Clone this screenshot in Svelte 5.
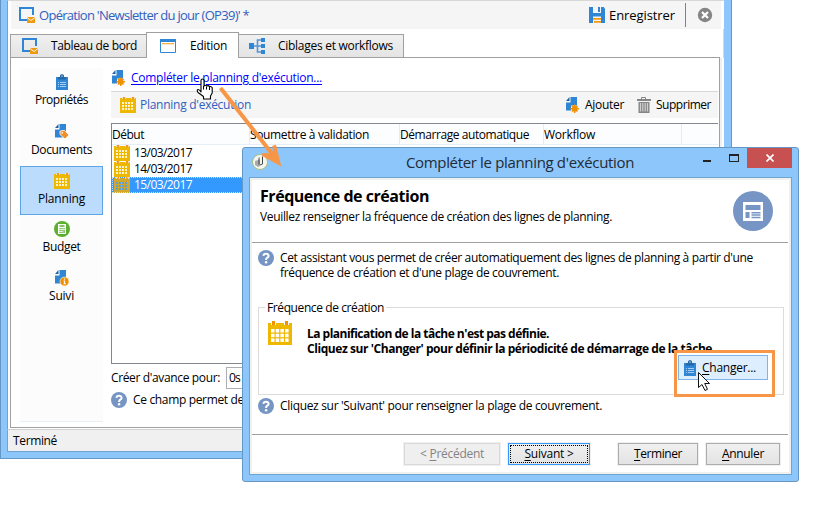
<script>
  const sections = [
    { icon: 'clipboard', label: 'Propriétés', width: 53 },
    { icon: 'doctag', label: 'Documents', width: 61 },
    { icon: 'calendar', label: 'Planning', width: 47, active: true },
    { icon: 'budget', label: 'Budget', width: 38 },
    { icon: 'docinfo', label: 'Suivi', width: 25 }
  ];
  const columns = [
    { label: 'Début', width: 32 },
    { label: 'Soumettre à validation', width: 119 },
    { label: 'Démarrage automatique', width: 129 },
    { label: 'Workflow', width: 51 }
  ];
  const rows = ['13/03/2017', '14/03/2017', '15/03/2017'];
  let selected = $state(2);

  // Spreads the letters of a label so that it takes the given width.
  function fit(node, width) {
    const natural = node.getBoundingClientRect().width;
    const count = node.textContent.length;
    node.style.letterSpacing = `${(width - natural) / count}px`;
  }
</script>

{#snippet t(text, width)}<span class="t" use:fit={width}>{text}</span>{/snippet}
{#snippet k(key, rest, width, lead = '')}<span class="t" use:fit={width}>{lead}<u>{key}</u>{rest}</span>{/snippet}

{#snippet doc()}
  <path fill="#2e86d4" d="M5.500 0H12v13.500H1V5.500h4.500z" />
  <path fill="#1d62a5" d="M1 4 4.500 0v4z" />
{/snippet}

{#snippet icon(name, size = 16)}
  <svg class="icon" width={size} height={size} viewBox={name === 'calendar' && size === 24 ? '0 0 24 24' : '0 0 16 16'}>
    {#if name === 'calendar' && size === 24}
      <path fill="#efb800" d="M0 2h24v22H0z" />
      <path fill="#fff" d="M3 0h5v4H3zM16 0h5v4h-5z" />
      <path fill="#f09000" d="M4 0h3v4H4zM17 0h3v4h-3z" />
      {#each [8, 12.7, 17.4] as y}
        {#each [3, 7.7, 12.4, 17.1] as x}
          <rect {x} {y} width="3.5" height="3.5" fill="#fff" />
        {/each}
      {/each}
    {:else if name === 'calendar'}
      <path class="leaf" fill="#efb800" d="M0 1h16v15H0z" />
      <path fill="#f6dcae" d="M2 0h4v2H2zM11 0h4v2h-4z" />
      <path fill="#ee9a2a" d="M3 0h2v2.500H3zM12 0h2v2.500h-2z" />
      {#each [5, 8, 11] as y}
        {#each [2, 5, 8, 11] as x}
          <rect class="cell" {x} {y} width="2" height="2" fill="#fdf3d0" />
        {/each}
      {/each}
    {:else if name === 'operation'}
      <path fill="none" stroke="#2e86d4" stroke-width="2" d="M8 13H1V1h13v7" />
      <path fill="#f09a12" d="M8 10h8v6H8z" />
      <path fill="none" stroke="#fff" stroke-width=".9" d="m8 10.500 4 3 4-3" />
    {:else if name === 'window'}
      <path fill="#fff" stroke="#2e86d4" d="M.5 1.500h15v13H.5z" />
      <path fill="#2e86d4" d="M0 1h16v3H0z" />
      <path fill="#f5b14c" d="M2 5h12v1.300H2z" />
    {:else if name === 'workflow'}
      <path fill="#2e86d4" d="M0 5h5v6H0zM12 0h4v4h-4zM12 6h4v4h-4zM12 12h4v4h-4z" />
      <path fill="none" stroke="#4d98da" stroke-width="1.600" d="M5 8h7M12 2H8.500v12H12" />
    {:else if name === 'docadd'}
      {@render doc()}
      <path fill="#f5f7fa" d="M6 8.500h8V15H6z" />
      <path stroke="#f09000" stroke-width="1.500" d="M9.700 7.500v8.500M5.500 11.700H14M6.900 8.900l5.600 5.600M12.500 8.900l-5.600 5.600" />
      <circle cx="9.700" cy="11.700" r="2.700" fill="#f09000" />
    {:else if name === 'doctag'}
      {@render doc()}
      <path fill="#f0902a" stroke="#fff" stroke-width=".8" d="m6 7 4.500-.7 4.500 4.700-4 4L6 10.500z" />
      <circle cx="8.200" cy="8.900" r=".8" fill="#fff" />
    {:else if name === 'docinfo'}
      {@render doc()}
      <circle cx="10.500" cy="11.500" r="4.500" fill="#f09000" stroke="#fff" stroke-width=".6" />
      <path fill="#fff" d="M9.900 8.600h1.200v1.200H9.900zM9.500 10.500h1.600v2.800h.7v.9H9.500v-.9h.6v-1.900h-.6z" />
    {:else if name === 'clipboard'}
      <path fill="#2e86d4" d="M2 3h12v13H2z" />
      <path fill="#9cc3e8" d="M4 3h8v1.500H4z" />
      <path fill="#2468a8" d="M6 3V1.500L7 .3h2l1 1.200V3h2v2.500H4V3z" />
      <path fill="#fff" d="M7.500 1.500h1v1.200h-1z" />
      <path stroke="#a5cbee" d="M4 8.500h1M6 8.500h6M4 10.500h1M6 10.500h6M4 12.500h1M6 12.500h6" />
    {:else if name === 'budget'}
      <circle cx="8" cy="8" r="8" fill="#5bb030" />
      <path fill="#fff" d="M4 3h8v10H4z" />
      <path fill="#5bb030" d="M5.500 4.300h5v1.500h-5zM5.400 7h1.300v1.200H5.400zM7.400 7h1.300v1.200H7.400zM9.400 7h1.300v1.200H9.400zM5.400 9h1.300v1.200H5.400zM7.400 9h1.300v1.200H7.400zM9.400 9h1.300v3H9.400zM5.400 11h1.300v1H5.400zM7.400 11h1.300v1H7.400z" />
    {:else if name === 'save'}
      <path fill="#2e86d4" d="M0 0h14.500L16 1.500V16H0z" />
      <path fill="#f5f5f5" d="M4 0h8v6H4zM4 9.500h8V16H4z" />
      <path fill="#2e86d4" d="M9 0h2v5H9z" />
      <path fill="#f09a12" d="M4 11h8v1.700H4zM5 14h7v1.700H5z" />
    {:else if name === 'close'}
      <circle cx="8" cy="8" r="7.200" fill="#858585" />
      <path stroke="#fff" stroke-width="2.200" d="m5 5 6 6M11 5l-6 6" />
    {:else if name === 'trash'}
      <path fill="none" stroke="#858585" d="M5.500 2V.500h4V2" />
      <path fill="#858585" d="M1 2h14v2H1zM2.500 5h11v11h-11z" />
      <path stroke="#d0d0d0" stroke-width="1.200" d="M4.500 6v8.500M6.800 6v8.500M9.200 6v8.500M11.500 6v8.500" />
    {:else if name === 'help'}
      <circle cx="8" cy="8" r="8" fill="#7695c4" />
      <path fill="none" stroke="#fff" stroke-width="2" d="M5.300 5.800Q5.700 3.700 8 3.700t2.600 2.200Q10.600 7 9.300 7.700T8.100 10" />
      <circle cx="8.100" cy="12.300" r="1.250" fill="#fff" />
    {/if}
  </svg>
{/snippet}

<div class="screen">
  <div class="window main">
    <header class="title">
      {@render icon('operation')}
      <span class="name">{@render t("Opération 'Newsletter du jour (OP39)' *", 210)}</span>
      <span class="save">{@render icon('save')}{@render t('Enregistrer', 66)}</span>
      <i class="divider"></i>
      {@render icon('close')}
    </header>

    <nav class="tabs">
      <div class="tab first">{@render icon('operation')}{@render t('Tableau de bord', 86)}</div>
      <div class="tab current">{@render icon('window')}{@render t('Edition', 37)}</div>
      <div class="tab last">{@render icon('workflow')}{@render t('Ciblages et workflows', 115)}</div>
    </nav>

    <div class="page">
      <aside>
        {#each sections as s}
          <div class="section" class:active={s.active}>
            {@render icon(s.icon)}
            {@render t(s.label, s.width)}
          </div>
        {/each}
      </aside>
      <main>
        <div class="complete">
          {@render icon('docadd')}
          <span class="link">{@render t("Compléter le planning d'exécution...", 191)}</span>
        </div>
        <div class="toolbar">
          {@render icon('calendar')}
          <span class="caption">{@render t("Planning d'exécution", 111)}</span>
          <span class="tool">{@render icon('docadd')}{@render t('Ajouter', 39)}</span>
          <span class="tool del">{@render icon('trash')}{@render t('Supprimer', 55)}</span>
        </div>
        <div class="table">
          <div class="head">
            {#each columns as c}<div>{@render t(c.label, c.width)}</div>{/each}
            <div></div>
          </div>
          {#each rows as row, i}
            <!-- svelte-ignore a11y_click_events_have_key_events, a11y_no_static_element_interactions -->
            <div class="row" class:selected={i === selected} onclick={() => (selected = i)}>
              {@render icon('calendar')}{@render t(row, 58)}
            </div>
          {/each}
        </div>
        <div class="advance">
          {@render t("Créer d'avance pour:", 109)}
          <div class="input">{@render t('0s', 11)}</div>
        </div>
        <div class="note">{@render icon('help')}{@render t('Ce champ permet de', 111)}</div>
      </main>
    </div>
    <footer class="status">{@render t('Terminé', 44)}</footer>
  </div>

  <div class="window dialog">
    <div class="caption-bar">
      <svg class="logo" width="16" height="16" viewBox="0 0 16 16">
        <circle cx="8" cy="8" r="7.500" fill="#f4f6ee" stroke="#a9bd86" />
        <path fill="#aaa" d="m3 7 3-1v7l-3-2zM6 4l2-1v9l-2 1z" />
        <path fill="none" stroke="#444" d="M10.500 2.500V10L8 11M7 5.500v5" />
      </svg>
      <span class="dialog-title">{@render t("Compléter le planning d'exécution", 228)}</span>
      <span class="min"></span>
      <span class="max"></span>
      <span class="x">
        <svg width="8" height="8" viewBox="0 0 8 8"><path stroke="#fff" stroke-width="1.700" d="m.5.500 7 7M7.500.500l-7 7" /></svg>
      </span>
    </div>
    <div class="client">
      <div class="intro">
        <div>
          <h1>{@render t('Fréquence de création', 169)}</h1>
          <p>{@render t('Veuillez renseigner la fréquence de création des lignes de planning.', 352)}</p>
        </div>
        <svg width="40" height="40" viewBox="0 0 40 40">
          <circle cx="20" cy="20" r="20" fill="#7695c4" />
          <path fill="#fff" d="M10 11h20v19H10z" />
          <path fill="#7695c4" d="M12.500 14h15v5h-15zM12.500 21h4v6h-4zM18.500 21h9v1.500h-9zM18.500 23.300h9v1.500h-9zM18.500 25.700h9v1.500h-9z" />
        </svg>
      </div>
      <div class="body">
        <div class="help">
          {@render icon('help')}
          <div>
            <p>{@render t("Cet assistant vous permet de créer automatiquement des lignes de planning à partir d'une", 473)}</p>
            <p>{@render t("fréquence de création et d'une plage de couvrement.", 279)}</p>
          </div>
        </div>
        <section class="group">
          <div class="legend">{@render t('Fréquence de création', 117)}</div>
          <div class="group-body">
            {@render icon('calendar', 24)}
            <div class="undefined">
              <p>{@render t("La planification de la tâche n'est pas définie.", 242)}</p>
              <p>{@render t("Cliquez sur 'Changer' pour définir la périodicité de démarrage de la tâche.", 408)}</p>
            </div>
          </div>
          <div class="highlight">
            <div class="change">{@render icon('clipboard')}{@render k('C', 'hanger...', 54)}</div>
          </div>
        </section>
        <div class="help next">
          {@render icon('help')}
          <p>{@render t("Cliquez sur 'Suivant' pour renseigner la plage de couvrement.", 322)}</p>
        </div>
      </div>
      <div class="buttons">
        <div class="btn off">{@render k('P', 'récédent', 64, '< ')}</div>
        <div class="btn default">{@render k('S', 'uivant >', 49)}</div>
        <div class="btn end">{@render k('T', 'erminer', 48)}</div>
        <div class="btn cancel">{@render k('A', 'nnuler', 42)}</div>
      </div>
    </div>
  </div>

  <svg class="overlay" width="836" height="508" viewBox="0 0 836 508">
    <path stroke="#f79646" stroke-width="4" d="M220.500 88 273 155" />
    <path fill="#f79646" d="m281.300 166.500-19-10.500-.3-2.800 9.500-.2 1.500-2-.8-5 3.800-1.200z" />
    <path
      fill="#fff" stroke="#000" stroke-width="1.100" stroke-linejoin="round"
      d="M201 92V80.500q0-1.500 1.500-1.500t1.500 1.500V86q1.500-1.500 2.800 0 1.700-1 2.700.6 2-.6 2.700 1.200V93l-1.700 3v3h-7v-2.500L198 92.500q-1.500-2.700 0-3 1.300-.2 3 2.500z"
    />
    <path stroke="#000" d="M203.500 86v3.500M206.500 86.500v3M209.500 87v3" />
    <path fill="#fff" stroke="#111" d="M698.500 372.500v15l3.500-3 3 6 2.500-1.200-2.800-5.800h4.800z" />
  </svg>
</div>

<style>
  :global(body) { background: #fff; }
  .screen {
    position: relative;
    width: 836px;
    height: 508px;
    overflow: hidden;
    background: #fff;
    font: 12px/16px "Open Sans", "Noto Sans", sans-serif;
    color: #000;
  }
  .screen, .screen * { box-sizing: border-box; }
  .t { white-space: pre; }
  .icon, svg { display: block; flex: none; }
  p, h1 { margin: 0; }
  u { text-underline-offset: 2px; text-decoration-thickness: 1px; }

  .window { position: absolute; display: flex; flex-direction: column; background: #8cc6fa; border: 1px solid #6497c4; }
  .main { left: 0; top: -1px; width: 732px; height: 460px; padding: 0 7px 6px 6px; border-top: 0; }
  .main::before { content: ""; flex: none; height: 1px; background: #fff; }

  .title { display: flex; flex: none; align-items: center; height: 29px; padding: 0 11px; background: linear-gradient(#f5f5f5, #f5f5f5) 3px 0 / 710px 100% no-repeat #fff; border-top: 1px solid #d8d8d8; border-left: 1px solid #6fa3d0; font-size: 13px; }
  .name { flex: 1; margin-left: 4px; color: #3060c0; }
  .save { display: flex; gap: 4px; align-items: center; }
  .divider { width: 1px; height: 24px; margin: 0 11px 0 10px; background: #808080; }

  .tabs { display: flex; flex: none; align-items: flex-end; height: 29px; padding: 0 4px 0 2px; background: linear-gradient(#a0a0a0, #a0a0a0) 2px 100% / 710px 1px no-repeat #fff; border-left: 1px solid #6fa3d0; border-right: 1px solid #c5ddf3; }
  .tab { display: flex; align-items: center; height: 24px; margin-left: -1px; border: 1px solid #a0a0a0; background: linear-gradient(#f0f0f0, #e4e4e4); }
  .first { width: 137px; padding-left: 11px; gap: 13px; margin-left: 0; }
  .current { height: 26px; width: 93px; padding: 1px 0 0 13px; gap: 14px; background: #fff; border-bottom: 0; }
  .last { width: 166px; padding-left: 10px; gap: 13px; }

  .page { display: flex; flex: none; height: 371px; padding: 10px 5px 6px 12px; background: linear-gradient(#a0a0a0, #a0a0a0) 2px 0 / 1px 370px no-repeat, linear-gradient(#a0a0a0, #a0a0a0) 711px 0 / 1px 370px no-repeat, linear-gradient(#a0a0a0, #a0a0a0) 2px 369px / 710px 1px no-repeat, linear-gradient(#f0f0f0, #f0f0f0) 712px 0 / 2px 100% no-repeat, #fff; border-left: 1px solid #6fa3d0; }
  aside { width: 83px; height: 354px; background: #fcfcfc; border-bottom: 1px solid #e6eef6; }
  .section { display: flex; flex-direction: column; align-items: center; gap: 2px; height: 49px; padding-top: 7px; }
  .section:first-child { padding-top: 6px; }
  .section.active { padding-top: 6px; border: 1px solid #5fa4e6; background: #bbdcfc; gap: 2px; }
  .section:nth-child(4) { height: 48px; padding-top: 6px; }
  main { flex: none; margin-left: 8px; width: 607px; }
  .complete { display: flex; align-items: center; height: 23px; gap: 4px; padding-bottom: 3px; }
  .link { color: #00f; text-decoration: underline; text-underline-offset: 2px; }
  .toolbar { display: flex; align-items: center; width: 607px; height: 27px; padding: 0 7px 0 9px; border-top: 1px solid #d8d8d8; background: #f5f5f5; }
  .caption { flex: 1; margin-left: 4px; color: #3060c0; }
  .tool { display: flex; align-items: center; gap: 4px; }
  .del { margin-left: 12px; }
  .table { width: 607px; height: 241px; margin-top: 5px; border: 1px solid #828790; border-right: 0; background: #fff; }
  .head { display: grid; grid-template-columns: 138px 150px 144px 138px 1fr; height: 21px; background: #fcfdfe; border-bottom: 1px solid #e6eef8; }
  .head > div { padding: 3px 0 0; border-right: 1px solid #e3ebf7; white-space: nowrap; }
  .head > div:last-child { border: 0; }
  .row { display: flex; align-items: center; gap: 4px; height: 16px; padding-left: 2px; overflow: hidden; }
  .row.selected { background: #3399ff; color: #fff; outline: 1px dotted #c8e0f8; outline-offset: -1px; }
  .row.selected .leaf { fill: #d2a82a; }
  .row.selected .cell { fill: #5e9fd6; }
  .advance { display: flex; align-items: center; gap: 6px; height: 24px; padding-top: 2px; margin-top: 1px; }
  .input { width: 110px; height: 22px; padding: 2px 0 0 2px; border: 1px solid #abadb3; }
  .note { display: flex; align-items: center; gap: 6px; margin-top: 3px; }
  .status { flex: none; height: 23px; padding: 3px 5px; background: #f0f0f0; border-top: 1px solid #d0d0d0; border-left: 1px solid #6fa3d0; border-bottom: 1px solid #6fa3d0; }

  .dialog { left: 242px; top: 147px; width: 557px; height: 335px; padding: 0 6px 6px; border-radius: 3px; }
  .caption-bar { display: flex; height: 29px; padding-left: 3px; }
  .logo { margin-top: 6px; }
  .dialog-title { margin: 3px auto 0 138px; font-size: 15px; line-height: 22px; color: #222b35; }
  .min { width: 8px; height: 2px; margin-top: 12px; background: #222; }
  .max { width: 10px; height: 8px; margin: 6px 8px 0 18px; border: 1px solid #222; border-top-width: 2px; }
  .x { display: flex; width: 45px; height: 20px; align-items: center; justify-content: center; background: #c75050; }
  .client { flex: 1; display: flex; flex-direction: column; background: #fff; border: 1px solid #6fa3d0; box-shadow: inset 0 0 0 2px #f0f0f0; }
  .intro { display: flex; justify-content: space-between; height: 65px; margin: 0 3px 0 2px; padding: 8px 15px 0 8px; border-bottom: 1px solid #a0a0a0; }
  .intro svg { margin-top: 5px; }
  h1 { font-size: 16px; line-height: 20px; }
  .intro p { margin-top: 3px; }
  .body { height: 191px; padding: 7px 8px 0; }
  .help { display: flex; gap: 6px; height: 57px; }
  .help p { line-height: 15px; }
  .group { position: relative; height: 88px; border: 1px solid #dcdcdc; width: 526px; }
  .legend { position: absolute; left: 6px; top: -8px; padding: 0 2px; background: #fff; }
  .group-body { display: flex; gap: 15px; padding: 13px 0 0 9px; }
  .undefined { padding-top: 5px; font-weight: bold; white-space: nowrap; }
  .undefined p { line-height: 15px; }
  .highlight { position: absolute; left: 415px; top: 42px; width: 101px; height: 47px; padding: 2px 3px; border: 3px solid #f79646; background: #fff; }
  .change { display: flex; align-items: center; gap: 4px; height: 25px; width: 90px; padding-left: 3px; border: 1px solid #7eb4ea; background: #ddeeff; margin-left: -2px; }
  .next { height: 16px; margin-top: 3px; }
  .buttons { display: flex; height: 40px; margin: 0 3px 0 2px; padding: 8px 0 0 152px; border-top: 1px solid #a0a0a0; }
  .btn { height: 22px; padding-top: 2px; border: 1px solid #acacac; outline: 1px solid #f0f0f0; background: linear-gradient(#f0f0f0, #e3e3e3); text-align: center; }
  .off { width: 96px; color: #838383; border-color: #d9d9d9; background: #efefef; }
  .default { position: relative; width: 82px; margin-left: 8px; border-color: #3399ff; }
  .default::after { content: ""; position: absolute; inset: 1px; border: 1px dotted #000; }
  .end { width: 80px; margin-left: 28px; }
  .cancel { width: 74px; margin-left: 8px; }

  .overlay { position: absolute; inset: 0; pointer-events: none; }
</style>
